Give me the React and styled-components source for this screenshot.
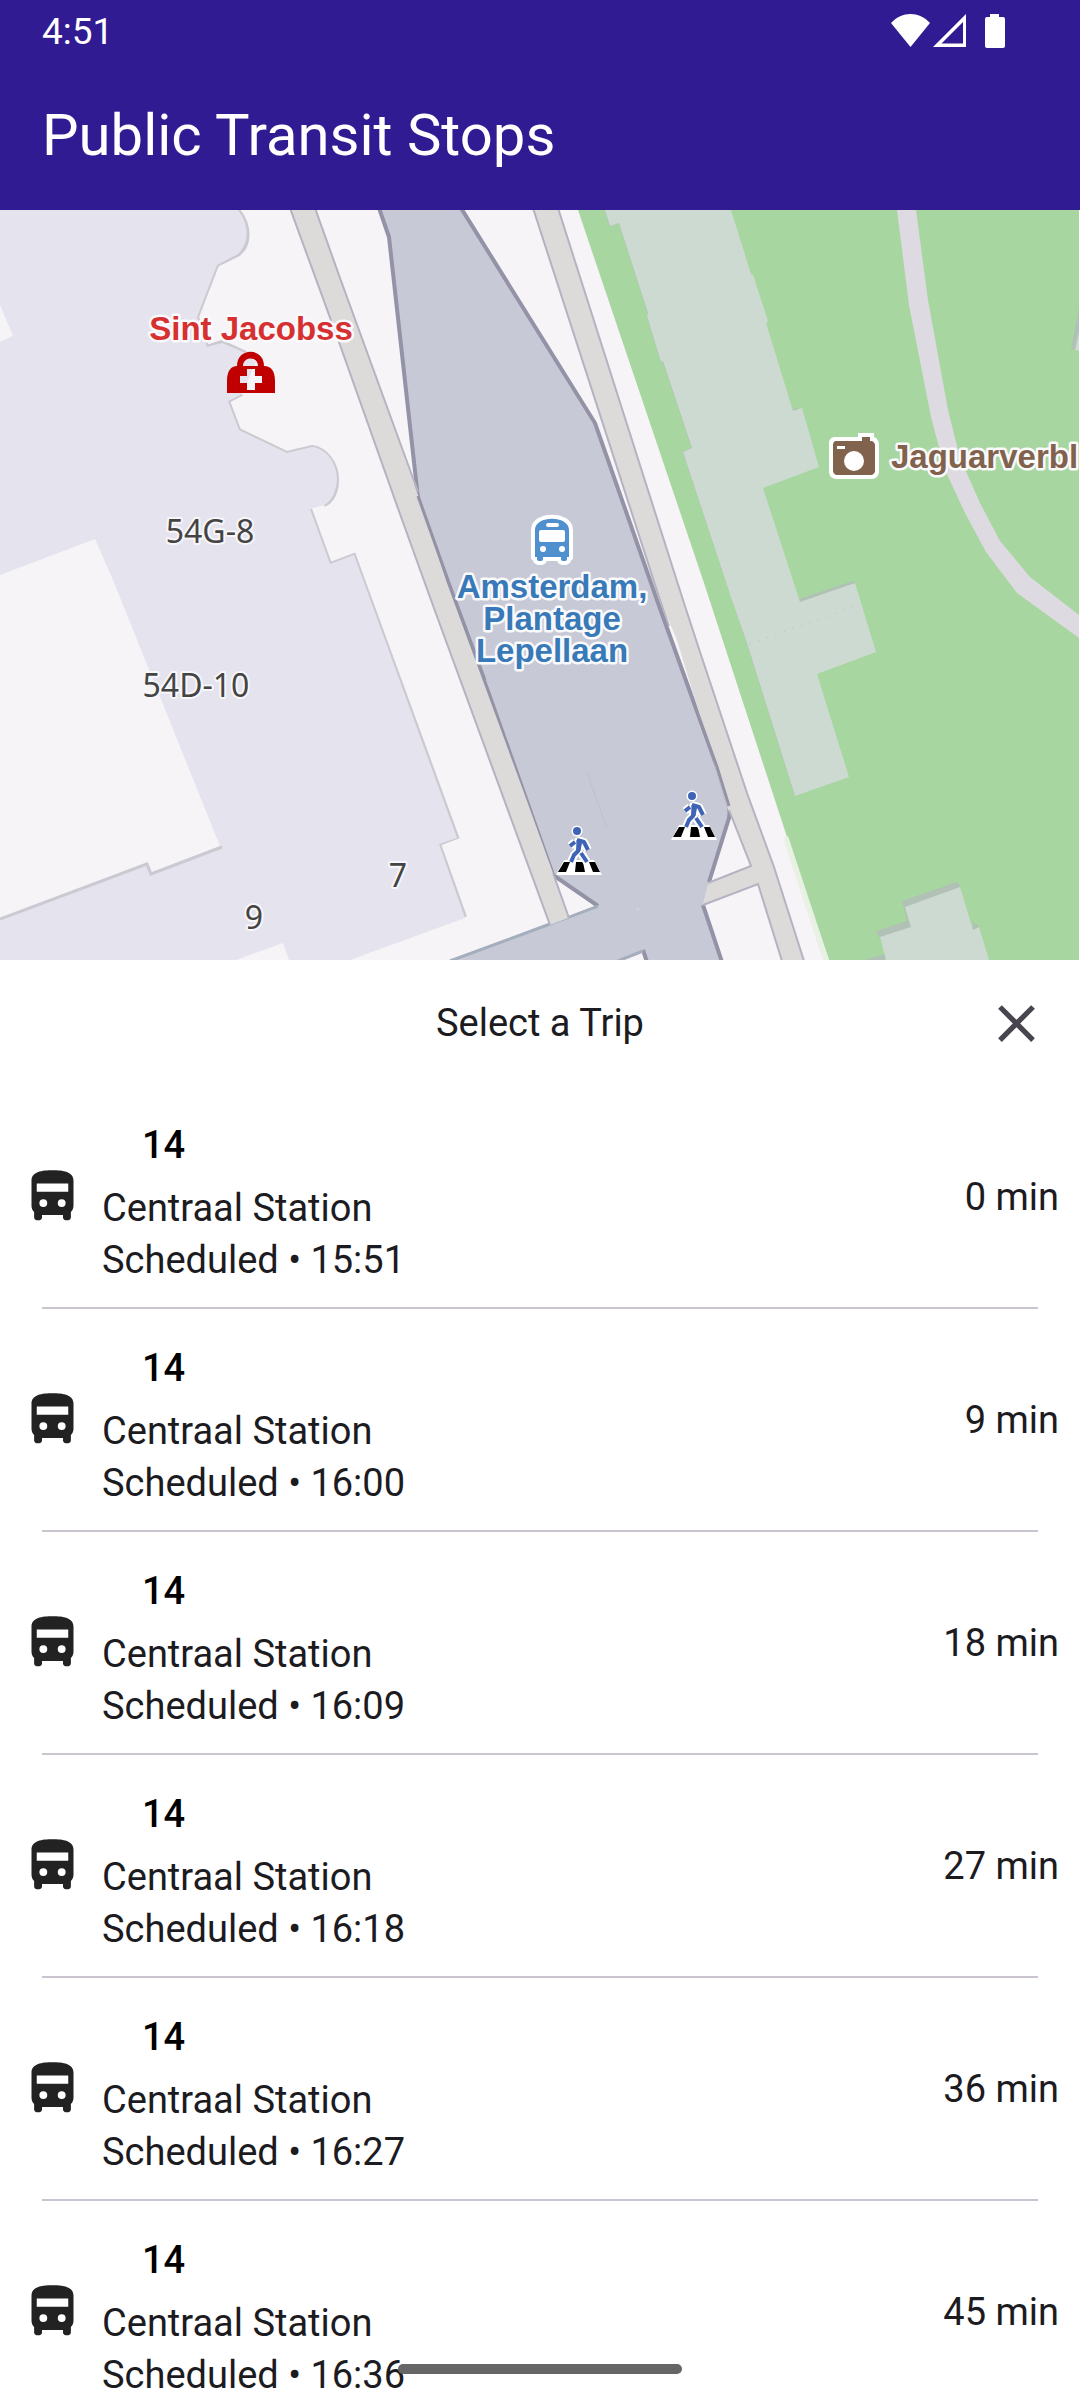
import styled, { createGlobalStyle } from "styled-components"

const GlobalStyle = createGlobalStyle`
    * {
        box-sizing: border-box;
    }
    body {
        margin: 0;
        background: #ffffff;
        font-family: Roboto, "Liberation Sans", sans-serif;
        color: #1c1b1f;
    }
`;

const Screen = styled.div`
    position: relative;
    display: flex;
    flex-direction: column;
    height: 100vh;
    overflow: hidden;
`;

const StatusBar = styled.div`
    display: flex;
    align-items: center;
    justify-content: space-between;
    flex: none;
    height: 63px;
    padding: 0 72px 0 42px;
    background: #311b92;
    color: #ffffff;
    font-size: 37px;
`;

const StatusIcons = styled.svg`
    width: 120px;
    height: 63px;
    fill: #ffffff;
`;

const TopBar = styled.header`
    display: flex;
    align-items: center;
    flex: none;
    height: 147px;
    padding: 0 42px 4px;
    background: #311b92;
`;

const Title = styled.h1`
    margin: 0;
    color: #ffffff;
    font-size: 58px;
    font-weight: 400;
    line-height: 74px;
`;

const MapPane = styled.div`
    flex: none;
    padding-right: 1px;
`;

const MapDrawing = styled.svg`
    display: block;
    width: 100%;
    aspect-ratio: 1079 / 750;
`;

const PlaceLabel = styled.text`
    fill: ${props => props.$color};
    stroke: #faf9fb;
    stroke-width: 5px;
    stroke-linejoin: round;
    paint-order: stroke;
    font-family: "Liberation Sans", sans-serif;
    font-size: 33px;
    font-weight: 700;
    text-anchor: ${props => props.$anchor || "middle"};
`;

const HouseLabel = styled.text`
    fill: #444444;
    stroke: #f7f6f9;
    stroke-width: 4px;
    stroke-linejoin: round;
    paint-order: stroke;
    font-family: "Noto Sans", sans-serif;
    font-size: 32px;
    text-anchor: middle;
`;

const Sheet = styled.section`
    display: flex;
    flex-direction: column;
    flex: 1;
    min-height: 0;
    background: #ffffff;
`;

const SheetHeader = styled.div`
    display: grid;
    grid-template-columns: 63px 1fr 63px;
    align-items: center;
    flex: none;
    height: 126px;
    padding: 0 32px;
`;

const SheetTitle = styled.h2`
    grid-column: 2;
    margin: 0;
    font-size: 38px;
    font-weight: 400;
    line-height: 52px;
    text-align: center;
`;

const CloseButton = styled.button`
    display: flex;
    padding: 0;
    border: 0;
    background: none;
    cursor: pointer;
`;

const Icon = styled.svg`
    flex: none;
    width: 63px;
    height: 63px;
    fill: ${props => props.$color};
`;

const TripList = styled.ul`
    flex: 1;
    min-height: 0;
    margin: 0;
    padding: 0;
    list-style: none;
    overflow-y: auto;
    scrollbar-width: none;
`;

const Trip = styled.li`
    &::after {
        content: "";
        display: block;
        height: 2px;
        margin: 0 42px;
        background: #cac4d0;
    }
`;

const TripRow = styled.div`
    display: flex;
    align-items: center;
    gap: 18px;
    height: 221px;
    padding: 0 21px;
    font-size: 38px;
    line-height: 52px;
`;

const TripInfo = styled.div`
    flex: 1;
    padding-top: 12px;
`;

const Line = styled.div`
    margin-bottom: 11px;
    padding-left: 40px;
    color: #000000;
    font-weight: 500;
`;

const HomeIndicator = styled.div`
    position: absolute;
    bottom: 26px;
    left: 50%;
    width: 284px;
    height: 10px;
    margin-left: -142px;
    border-radius: 5px;
    background: #666666;
`;

const trips = [
    { line: "14", headsign: "Centraal Station", time: "15:51", wait: 0 },
    { line: "14", headsign: "Centraal Station", time: "16:00", wait: 9 },
    { line: "14", headsign: "Centraal Station", time: "16:09", wait: 18 },
    { line: "14", headsign: "Centraal Station", time: "16:18", wait: 27 },
    { line: "14", headsign: "Centraal Station", time: "16:27", wait: 36 },
    { line: "14", headsign: "Centraal Station", time: "16:36", wait: 45 },
];

const BusIcon = () => (
    <Icon viewBox="0 0 24 24" $color="#222222" aria-hidden="true">
        <path fillRule="evenodd" d="M12 2C8 2 4 2.5 4 6v9.5c0 .95.38 1.81 1 2.44V20c0 .55.45 1 1 1h1c.55 0 1-.45 1-1v-1h8v1c0 .55.45 1 1 1h1c.55 0 1-.45 1-1v-2.06c.62-.63 1-1.49 1-2.44V6c0-3.5-4-4-8-4zM6 7h12v3.2H6zM8.5 13a1.5 1.5 0 1 1 0 3 1.5 1.5 0 0 1 0-3zM15.5 13a1.5 1.5 0 1 1 0 3 1.5 1.5 0 0 1 0-3z" />
    </Icon>
)

const Crossing = ({ x, y }) => (
    <g transform={`translate(${x} ${y})`}>
        <path fill="#fff" d="M7 25h30l8 15H-1z" />
        <path d="M7 27h6l-4 10H1zM19 27h7l2 10h-10zM32 27h6l5 10h-7z" />
        {[["#fff", 8, 5.5], ["#3f64b5", 4, 4]].map(([color, width, r]) => (
            <g key={color} fill="none" stroke={color} strokeWidth={width} strokeLinejoin="round">
                <circle cx="20" cy="-4" r={r} fill={color} stroke="none" />
                <path d="M13 11l5-4M20 5l7 2 4 8M22 6l-1 10-4 4-3 7M24 18l6 9" />
                <path d="M20 5h5l-2 11h-3z" fill={color} strokeWidth={width - 3} />
            </g>
        ))}
    </g>
)

const TransitMap = () => (
    <MapDrawing viewBox="0 210 1079 750" preserveAspectRatio="xMidYMid slice" role="img" aria-label="Map of Plantage Lepellaan">
        <rect y="210" width="1079" height="750" fill="#f6f4f6" />

        {/* buildings on the west side */}
        <path fill="none" stroke="#cbcad2" strokeWidth="4" d="M238 210C250 224 251 244 239 254L217 265L197 317L207 347L222 342L246 353M242 394L228 401L239 430L287 453L312 447C326 449 337 463 337 480C337 492 332 502 324 505M310 509L330 564L354 555L457 837L439 844L465 917" />
        <path fill="#e5e3ed" d="M0 210H238C249 224 250 242 238 254L217 265L197 317L207 347L222 343L246 353L256 362L242 394L228 401L239 430L287 453L312 447C326 448 337 463 337 480C336 492 331 502 324 505L310 509L330 564L354 555L457 838L439 844L465 918L350 960H0Z" />
        <path fill="#f6f4f6" d="M0 305L13 336L0 342ZM0 575L95 539L113 580L220 846L151 873L148 865L0 919ZM236 960L283 943L289 960Z" />
        <path fill="none" stroke="#cbcad2" strokeWidth="3" d="M0 919L147 864L151 874L222 847" />

        {/* park and its buildings */}
        <path fill="#a8d6a0" d="M578 210H1079V960H829L788 840L703 580Z" />
        <path fill="#e9f1e4" d="M783 838L788 836L829 960H823Z" />
        <path fill="#b1c1b6" d="M799 599L853 581L856 584L800 604ZM876 931L907 921L902 901L957 882L961 888L905 909L911 927L880 939ZM973 922L980 927L973 930ZM864 960L885 954V960ZM1079 307L1071 349L1079 351ZM791 410L801 407L793 412Z" />
        <path fill="none" stroke="#b1c1b6" d="M605 210L610 226L619 223L648 313L647 316L661 362L663 361L692 448L683 452L747 643L795 796" />
        <path fill="#cddad2" d="M605 210L610 226L619 223L648 313L647 316L661 362L663 361L692 448L683 452L732 600L747 643L795 796L849 777L817 674L876 652L855 583L800 602L763 488L819 467L802 408L793 411L766 323L768 321L753 275L751 274L731 210ZM880 937L911 927L905 907L960 887L973 930L979 927L989 960H886ZM1079 332L1075 350L1079 351Z" />
        <path fill="none" stroke="#b1c1b6" strokeDasharray="1 8" d="M750 644L860 604" />
        <path fill="#dddae1" d="M897 210L909 305L931 417L945 470L965 513L986 552L1017 593L1079 638V615L1030 577L1000 541L980 503L960 458L948 410L928 300L916 210Z" />

        {/* tram square */}
        <path fill="#c7c9d6" d="M379 210L389 237L418 498L447 580L490 697L553 875L598 906L568 918L452 960H620L643 951L646 960H721L703 905L709 882L729 818V807L717 767L657 600L595 423L461 210Z" />
        <path fill="none" stroke="#9492a6" strokeWidth="4" d="M379 208L389 237L418 498L447 580L490 697L553 875L598 906M461 208L595 423L657 600L717 767L729 807Q730 813 729 818L709 882M703 905L722 962M643 950L647 962" />
        <path fill="none" stroke="#a5aebe" strokeWidth="3" d="M450 961L550 924L598 906M618 961L643 951" />
        <path fill="none" stroke="#bfc1cd" d="M587 772L607 829" />
        <circle cx="638" cy="909" r="0.6" fill="#fff" />

        {/* ground left between the footway and the square */}
        <path fill="#f6f4f6" d="M557 881L594 906L568 916Z" />

        {/* footways */}
        <path fill="#dcdbd9" d="M290 210L340 345L400 514L431 600L550 925L568 918L553 873L523 790L447 583L418 495L340 278L315 210Z" />
        <path fill="none" stroke="#b5b2c2" strokeWidth="2" d="M290 208L340 345L400 514L431 600L550 925M315 208L340 278L418 492M553 873L569 918" />
        <path fill="none" stroke="#9492a6" strokeWidth="3" d="M418 496L449 583L485 680" />
        <path fill="#dcdbd9" d="M533 210L660 600L677 640L728 810L732 817L751 866L709 882L703 905L758 884L782 960H804L774 867L747 793L700 652L683 600L558 210Z" />
        <path fill="none" stroke="#b5b2c2" strokeWidth="2" d="M533 208L660 600L669 626M729 810L751 866L708 883M703 905L758 884L782 961M804 961L774 867L747 793L700 652L683 600L558 208" />
        <path fill="none" stroke="#9492a6" strokeWidth="3" d="M657 600L717 767L729 806" />

        {/* first aid */}
        <path fill="#c00000" fillRule="evenodd" d="M227 393V381C227 371 231 366 237 366C237 347 264 347 264 366C271 366 275 371 275 381V393ZM243 366H258C258 356 243 356 243 366ZM247 369V376H240V383H247V390H255V383H262V376H255V369Z" />
        <PlaceLabel x="251" y="340" $color="#d63031">Sint Jacobss</PlaceLabel>

        {/* viewpoint */}
        <path fill="#fff" d="M835 437H858V433H874V437C877 438 879 441 879 445V471C879 476 876 479 871 479H837C832 479 829 476 829 471V443C829 439 832 437 835 437Z" />
        <path fill="#80624d" d="M836 441H862V437H870V441H871C873 441 875 443 875 445V471C875 473 873 475 871 475H837C835 475 833 473 833 471V445C833 443 834 441 836 441Z" />
        <rect x="837" y="446" width="8" height="3" fill="#fff" />
        <circle cx="854" cy="461" r="10" fill="#fff" />
        <PlaceLabel x="891" y="468" $color="#80624d" $anchor="start">Jaguarverbl</PlaceLabel>

        {/* stop */}
        <path fill="#5090ce" stroke="#fff" strokeWidth="8" strokeLinejoin="round" paintOrder="stroke" d="M535 557V530C535 515 569 515 569 530V557H567V559Q567 561 564 561Q561 561 561 559V557H543V559Q543 561 540 561Q537 561 537 559V557Z" />
        <rect x="539" y="530" width="26" height="12" rx="2" fill="#fff" />
        <rect x="546" y="523" width="13" height="4" rx="2" fill="#fff" />
        <circle cx="543" cy="549" r="3" fill="#fff" />
        <circle cx="562" cy="549" r="3" fill="#fff" />
        <PlaceLabel x="552" y="598" $color="#3879b8">Amsterdam,</PlaceLabel>
        <PlaceLabel x="552" y="630" $color="#3879b8">Plantage</PlaceLabel>
        <PlaceLabel x="552" y="662" $color="#3879b8">Lepellaan</PlaceLabel>

        <Crossing x={557} y={835} />
        <Crossing x={672} y={800} />

        <HouseLabel x="210" y="543">54G-8</HouseLabel>
        <HouseLabel x="196" y="697">54D-10</HouseLabel>
        <HouseLabel x="398" y="887">7</HouseLabel>
        <HouseLabel x="254" y="929">9</HouseLabel>
    </MapDrawing>
)

const App = () => {
  return (
    <Screen>
        <GlobalStyle/>
        <StatusBar>
            <span>4:51</span>
            <StatusIcons viewBox="888 0 120 63" aria-hidden="true">
                <path d="M891 23C902 11 919 11 930 23L910.500 47Z" />
                <path fillRule="evenodd" d="M933 47L966 14V47ZM941.500 43.500H963V22Z" />
                <path d="M990 17V14H999V17H1003Q1005 17 1005 19V46Q1005 48 1003 48H987Q985 48 985 46V19Q985 17 987 17Z" />
            </StatusIcons>
        </StatusBar>
        <TopBar>
            <Title>Public Transit Stops</Title>
        </TopBar>
        <MapPane>
            <TransitMap/>
        </MapPane>
        <Sheet>
            <SheetHeader>
                <SheetTitle>Select a Trip</SheetTitle>
                <CloseButton type="button" aria-label="Close">
                    <Icon viewBox="0 0 24 24" $color="#49454f" aria-hidden="true">
                        <path d="M19 6.410L17.590 5 12 10.590 6.410 5 5 6.410 10.590 12 5 17.590 6.410 19 12 13.410 17.590 19 19 17.590 13.410 12z" />
                    </Icon>
                </CloseButton>
            </SheetHeader>
            <TripList>
                {trips.map((trip) => (
                    <Trip key={trip.time}>
                        <TripRow>
                            <BusIcon/>
                            <TripInfo>
                                <Line>{trip.line}</Line>
                                <div>{trip.headsign}</div>
                                <div>Scheduled • {trip.time}</div>
                            </TripInfo>
                            <span>{trip.wait} min</span>
                        </TripRow>
                    </Trip>
                ))}
            </TripList>
        </Sheet>
        <HomeIndicator/>
    </Screen>
  )
}

export default App
